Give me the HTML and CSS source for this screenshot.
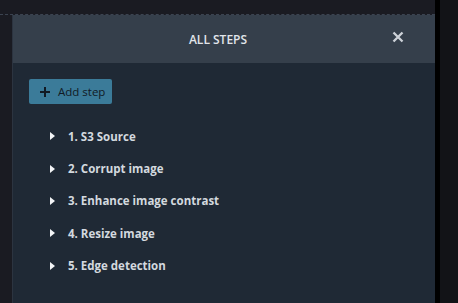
FILE: index.html
```html
<!DOCTYPE html>
<html lang="en">
<head>
    <meta charset="UTF-8">
    <title>All steps</title>
    <link rel="stylesheet" href="styles.css">
</head>
<body>
    <div class="main">
        <div class="topbar"></div>
        <div class="layout">
            <div class="gutter"></div>
            <section class="panel">
                <header class="panel-header">
                    <h2 class="panel-title">ALL STEPS</h2>
                    <button class="close-button" aria-label="Close">
                        <svg viewBox="0 0 12 12" xmlns="http://www.w3.org/2000/svg">
                            <path d="M1.5 1.5l9 9M10.5 1.5l-9 9"/>
                        </svg>
                    </button>
                </header>
                <div class="panel-body">
                    <button class="add-button">
                        <svg viewBox="0 0 10 10" xmlns="http://www.w3.org/2000/svg">
                            <path d="M5 0v10M0 5h10"/>
                        </svg>
                        Add step
                    </button>
                    <ul class="steps">
                        <li class="step"><span class="caret"></span>1. S3 Source</li>
                        <li class="step"><span class="caret"></span>2. Corrupt image</li>
                        <li class="step"><span class="caret"></span>3. Enhance image contrast</li>
                        <li class="step"><span class="caret"></span>4. Resize image</li>
                        <li class="step"><span class="caret"></span>5. Edge detection</li>
                    </ul>
                </div>
            </section>
        </div>
    </div>
    <div class="divider"></div>
    <div class="side"></div>
</body>
</html>
```

FILE: styles.css
```css
body {
    margin: 0;
    height: 303px;
    overflow: hidden;
    background-color: #1a1b22;
    font-family: 'Open Sans', 'Noto Sans', Arial, sans-serif;
    display: flex;
}

.main {
    width: 435px;
    display: flex;
    flex-direction: column;
}

.topbar {
    height: 14px;
    background-color: #1a1b22;
    border-bottom: 1px dashed #3b4350;
}

.layout {
    flex: 1;
    display: flex;
}

.gutter {
    width: 12px;
    background-color: #1a1b22;
}

.panel {
    flex: 1;
    border-left: 1px solid #2c3440;
    background-color: #1f2935;
    display: flex;
    flex-direction: column;
}

.panel-header {
    height: 48px;
    padding-right: 12px;
    background-color: #353f4b;
    display: flex;
    align-items: center;
    justify-content: center;
    position: relative;
}

.panel-title {
    margin: 0;
    font-size: 12px;
    font-weight: 600;
    color: #e1e5ea;
}

.close-button {
    position: absolute;
    right: 29px;
    top: 14px;
    width: 16px;
    height: 16px;
    padding: 0;
    background: transparent;
    border: none;
    cursor: pointer;
    display: flex;
    align-items: center;
    justify-content: center;
}

.close-button svg {
    width: 12px;
    height: 12px;
    stroke: #cdd2d8;
    stroke-width: 2.3;
    fill: none;
}

.panel-body {
    padding: 16px 16px 0 16px;
}

.add-button {
    display: flex;
    align-items: center;
    gap: 8px;
    height: 25px;
    width: 83px;
    padding: 0 0 0 11px;
    border: none;
    border-radius: 2px;
    background-color: #3b7b99;
    color: #111a24;
    font-family: 'Open Sans', 'Noto Sans', Arial, sans-serif;
    font-size: 11.5px;
    cursor: pointer;
}

.add-button svg {
    width: 10px;
    height: 10px;
    stroke: #111a24;
    stroke-width: 2;
    fill: none;
}

.steps {
    list-style: none;
    margin: 16px 0 0 0;
    padding: 0 0 0 21px;
}

.step {
    display: flex;
    align-items: center;
    height: 32.4px;
    font-size: 11.5px;
    font-weight: 700;
    color: #d3d9df;
}

.caret {
    width: 0;
    height: 0;
    border-top: 4px solid transparent;
    border-bottom: 4px solid transparent;
    border-left: 5px solid #f2f4f6;
    margin-right: 13px;
}

.divider {
    width: 5px;
    background-color: #000;
}

.side {
    flex: 1;
    background-color: #121317;
}
```
